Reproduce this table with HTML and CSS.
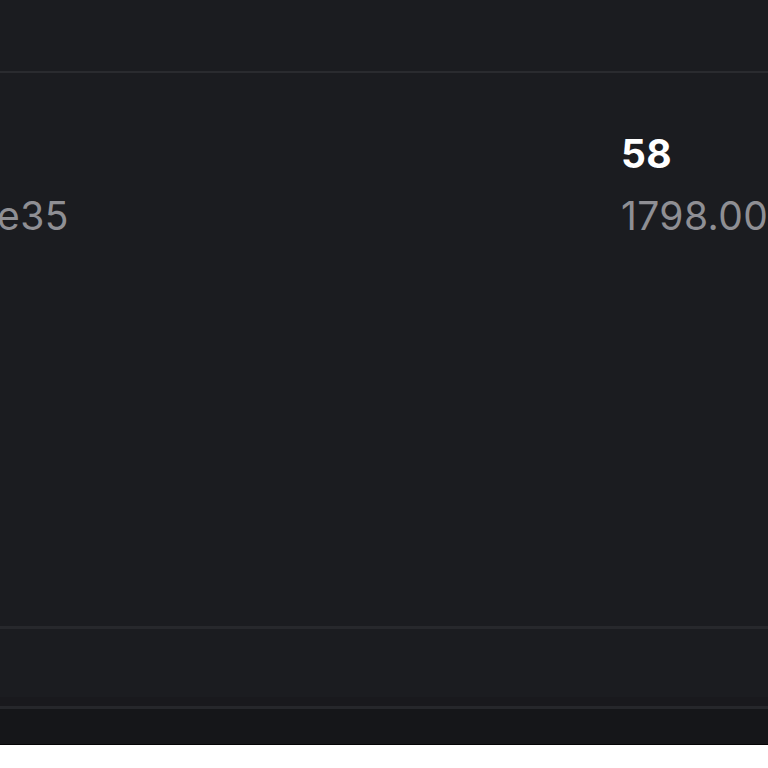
FILE: index.html
```html
<!DOCTYPE html>
<html lang="en">
<head>
<meta charset="utf-8">
<title>Row</title>
<link rel="stylesheet" href="styles.css">
</head>
<body>
<div class="screen">
  <div class="topbar"></div>
  <div class="row">
    <div class="cell cell-left">
      <div class="sub shift">e35</div>
    </div>
    <div class="cell cell-right">
      <div class="title">58</div>
      <div class="sub">1798.00</div>
    </div>
  </div>
  <div class="section"></div>
  <div class="footer"></div>
</div>
</body>
</html>
```

FILE: styles.css
```css
html, body {
  margin: 0;
  padding: 0;
  background: #ffffff;
  overflow: hidden;
}

.screen {
  width: 768px;
  height: 744px;
  background: #1b1c20;
  display: flex;
  flex-direction: column;
  border-bottom: 1px solid #050506;
  box-shadow: 0 2px 0 #9a9a9c;
  font-family: Inter, "Noto Sans", sans-serif;
  overflow: hidden;
}

.topbar {
  height: 71px;
  flex: none;
  border-bottom: 2px solid #2a2b2f;
}

.row {
  flex: 1;
  display: grid;
  grid-template-columns: 621px 1fr;
  padding-top: 50px;
  border-bottom: 3px solid #27282c;
  white-space: nowrap;
}

.cell {
  font-size: 39px;
  line-height: 62px;
  letter-spacing: 0.4px;
}

.cell-left {
  padding-top: 62px;
}

.shift {
  margin-left: -3px;
}

.title {
  color: #ffffff;
  font-weight: 700;
}

.sub {
  color: #8f8f94;
  font-weight: 400;
}

.section {
  height: 77px;
  flex: none;
  background: linear-gradient(to bottom, #1b1c20 0, #1b1c20 68px, #19191d 68px);
  border-bottom: 3px solid #26272b;
}

.footer {
  height: 35px;
  flex: none;
  background: #151619;
}
```
